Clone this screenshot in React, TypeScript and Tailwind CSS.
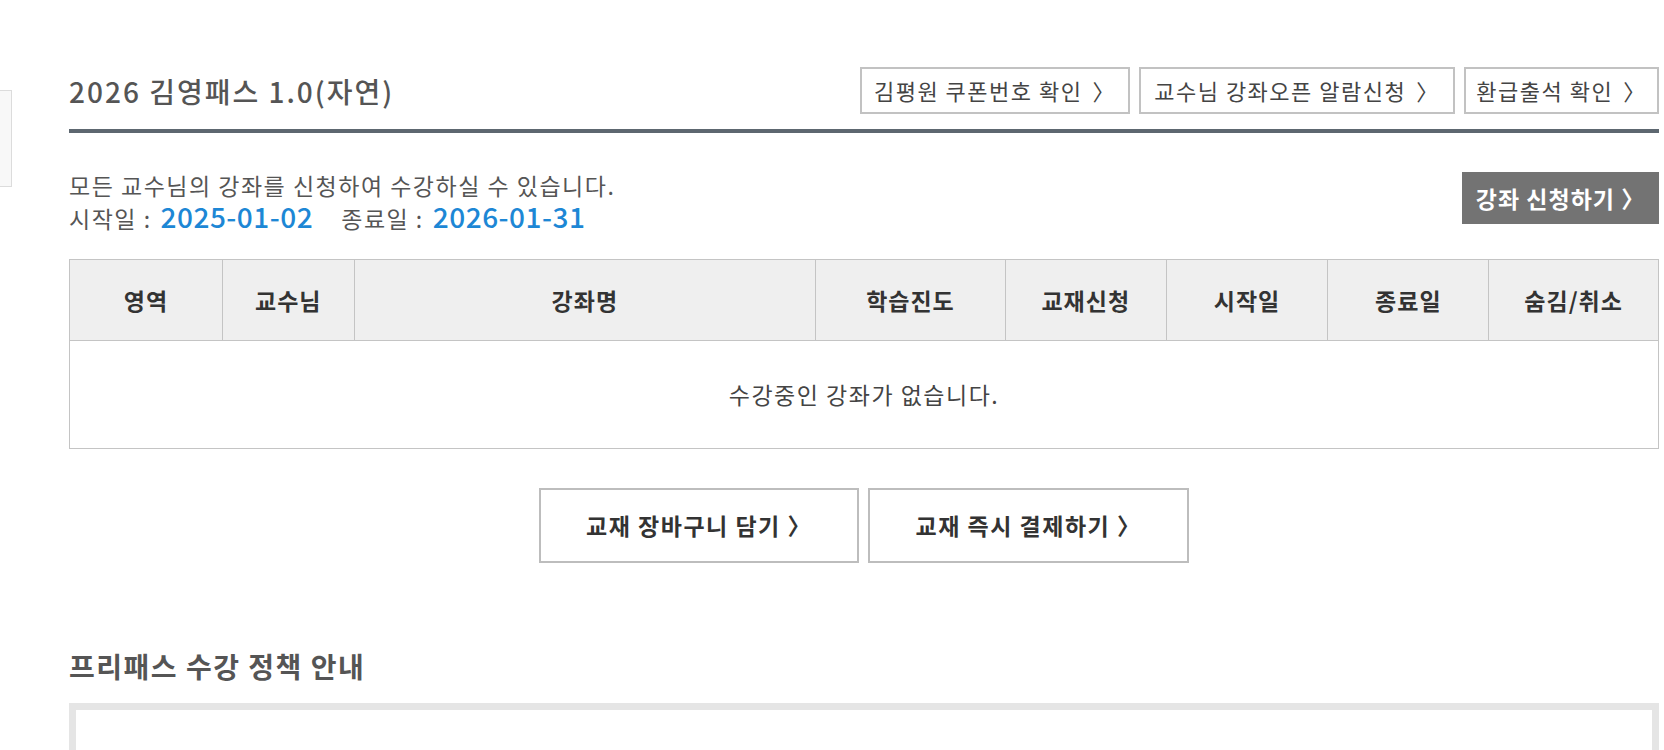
import React from "react";

const columns = [
  { label: "영역", w: "w-[152px]" },
  { label: "교수님", w: "w-[132px]" },
  { label: "강좌명", w: "w-[462px]" },
  { label: "학습진도", w: "w-[190px]" },
  { label: "교재신청", w: "w-[161px]" },
  { label: "시작일", w: "w-[162px]" },
  { label: "종료일", w: "w-[161px]" },
  { label: "숨김/취소", w: "w-[170px]" },
];

const topLinks = [
  { label: "김평원 쿠폰번호 확인", w: "w-[270px]" },
  { label: "교수님 강좌오픈 알람신청", w: "w-[316px]" },
  { label: "환급출석 확인", w: "w-[195px]" },
];

export default function App() {
  return (
    <div className="min-h-screen bg-white flex font-['Noto_Sans_CJK_KR','Noto_Sans',sans-serif] overflow-hidden">
      {/* sidebar edge, cut off on the left */}
      <div className="w-[12px] shrink-0 mt-[90px] h-[97px] bg-[#f8f8f8] border border-l-0 border-[#dcdcdc]" />

      <div className="ml-[57px] w-[1590px] shrink-0 pt-[67px]">
        {/* title row */}
        <div className="flex items-center justify-between">
          <h1 className="text-[28px] leading-[36px] font-medium text-[#555] tracking-[2px]">
            2026 김영패스 1.0(자연)
          </h1>
          <div className="flex gap-[9px]">
            {topLinks.map((l) => (
              <button
                key={l.label}
                className={`${l.w} h-[47px] border-2 border-[#c2c2c2] bg-white text-[22px] tracking-[1.5px] text-[#444] flex items-center justify-center`}
              >
                {l.label}
                <span className="ml-[10px]">〉</span>
              </button>
            ))}
          </div>
        </div>
        <div className="mt-[15px] h-[4px] bg-[#5d6770]" />

        {/* intro */}
        <div className="mt-[37px] flex justify-between items-start">
          <div className="text-[23px] text-[#555] tracking-[1.5px]">
            <p className="leading-[31px]">모든 교수님의 강좌를 신청하여 수강하실 수 있습니다.</p>
            <p className="leading-[31px] flex items-baseline">
              <span className="mr-[9px] leading-[31px]">시작일 :</span>
              <span className="text-[28px] leading-[31px] font-medium text-[#1d87d5] tracking-[0.5px]">2025-01-02</span>
              <span className="ml-[28px] mr-[9px] leading-[31px]">종료일 :</span>
              <span className="text-[28px] leading-[31px] font-medium text-[#1d87d5] tracking-[0.5px]">2026-01-31</span>
            </p>
          </div>
          <button className="mt-[2px] w-[197px] h-[52px] bg-[#737373] text-white text-[23px] tracking-[1px] font-bold flex items-center justify-center">
            강좌 신청하기 〉
          </button>
        </div>

        {/* course table */}
        <div className="mt-[25px] border border-[#c4c4c4]">
          <div className="flex h-[81px] bg-[#efefef] border-b border-[#c4c4c4]">
            {columns.map((c, i) => (
              <div
                key={c.label}
                className={`${c.w} ${i > 0 ? "border-l border-[#c4c4c4]" : ""} flex items-center justify-center text-[23px] tracking-[1px] font-bold text-[#333]`}
              >
                {c.label}
              </div>
            ))}
          </div>
          <div className="h-[107px] flex items-center justify-center text-[23px] tracking-[1.5px] text-[#444]">
            수강중인 강좌가 없습니다.
          </div>
        </div>

        {/* book buttons */}
        <div className="mt-[39px] flex justify-center gap-[9px]">
          <button className="w-[320px] h-[75px] border-2 border-[#bdbdbd] bg-white text-[23px] tracking-[1.5px] font-bold text-[#333]">
            교재 장바구니 담기 〉
          </button>
          <button className="w-[321px] h-[75px] border-2 border-[#bdbdbd] bg-white text-[23px] tracking-[1.5px] font-bold text-[#333]">
            교재 즉시 결제하기 〉
          </button>
        </div>

        {/* policy */}
        <h2 className="mt-[85px] text-[28px] leading-[36px] font-bold text-[#555] tracking-[1.5px]">
          프리패스 수강 정책 안내
        </h2>
        <div className="mt-[19px] h-[120px] border-[7px] border-[#e5e5e5] bg-white" />
      </div>
    </div>
  );
}
